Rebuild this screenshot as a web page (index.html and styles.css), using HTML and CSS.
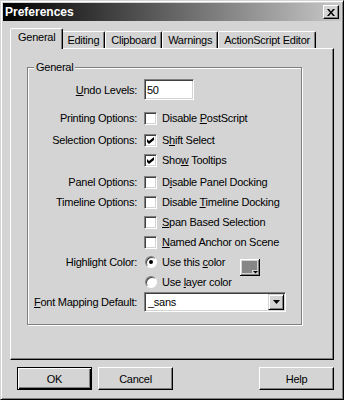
FILE: index.html
```html
<!DOCTYPE html>
<html lang="en">
<head>
    <meta charset="UTF-8">
    <title>Preferences</title>
    <link rel="stylesheet" href="styles.css">
</head>
<body>

<div class="window">
    <div class="titlebar">
        <span class="title">Preferences</span>
        <button type="button" class="close-btn" aria-label="Close">
            <svg width="8" height="7" viewBox="0 0 8 7"><path d="M0 0h2l2 2.5 2-2.5h2l-3 3.5 3 3.5h-2l-2-2.5-2 2.5h-2l3-3.5z" fill="#000"/></svg>
        </button>
    </div>

    <div class="tabs">
        <div class="tab active">General</div>
        <div class="tab">Editing</div>
        <div class="tab">Clipboard</div>
        <div class="tab">Warnings</div>
        <div class="tab">ActionScript Editor</div>
    </div>

    <div class="panel">
        <fieldset class="group">
            <legend>General</legend>

            <div class="row row-undo">
                <label class="row-label" for="undo"><u>U</u>ndo Levels:</label>
                <input type="text" id="undo" class="textbox" value="50">
            </div>

            <div class="row row-printing">
                <span class="row-label">Printing Options:</span>
                <span class="option"><span class="check"></span><span>Disable <u>P</u>ostScript</span></span>
            </div>

            <div class="row row-space">
                <span class="row-label">Selection Options:</span>
                <span class="option"><span class="check"><svg width="7" height="7" viewBox="0 0 7 7"><path d="M0 2l2 2 5-4v3l-5 4-2-2z" fill="#000"/></svg></span><span>S<u>h</u>ift Select</span></span>
            </div>
            <div class="row indent">
                <span class="option"><span class="check"><svg width="7" height="7" viewBox="0 0 7 7"><path d="M0 2l2 2 5-4v3l-5 4-2-2z" fill="#000"/></svg></span><span>Sho<u>w</u> Tooltips</span></span>
            </div>

            <div class="row row-space">
                <span class="row-label">Panel Options:</span>
                <span class="option"><span class="check"></span><span>D<u>i</u>sable Panel Docking</span></span>
            </div>
            <div class="row">
                <span class="row-label">Timeline Options:</span>
                <span class="option"><span class="check"></span><span>Disable <u>T</u>imeline Docking</span></span>
            </div>
            <div class="row indent">
                <span class="option"><span class="check"></span><span><u>S</u>pan Based Selection</span></span>
            </div>
            <div class="row indent">
                <span class="option"><span class="check"></span><span><u>N</u>amed Anchor on Scene</span></span>
            </div>

            <div class="row row-top">
                <span class="row-label">Highlight Color:</span>
                <span class="option option-color"><span class="radio on"></span><span>Use this <u>c</u>olor</span></span>
                <svg class="swatch" width="20" height="17" viewBox="0 0 20 17">
                    <rect width="20" height="17" fill="#000"/>
                    <rect width="19" height="16" fill="#fff"/>
                    <rect x="1" y="1" width="18" height="15" fill="#808080"/>
                    <rect x="1" y="1" width="17" height="14" fill="#d4d4d4"/>
                    <rect x="2" y="2" width="15" height="12" fill="#868686"/>
                    <rect x="12" y="11" width="6" height="4" fill="#d4d4d4"/>
                    <path d="M13 12h5l-2.5 2.5z" fill="#000"/>
                </svg>
            </div>
            <div class="row indent">
                <span class="option"><span class="radio"></span><span>Use <u>l</u>ayer color</span></span>
            </div>

            <div class="row row-font">
                <span class="row-label"><u>F</u>ont Mapping Default:</span>
                <div class="combo">
                    <span class="combo-text">_sans</span>
                    <span class="combo-btn"><svg width="7" height="4" viewBox="0 0 7 4"><path d="M0 0h7l-3.5 4z" fill="#000"/></svg></span>
                </div>
            </div>
        </fieldset>
    </div>

    <div class="actions">
        <button type="button" class="btn btn-default">OK</button>
        <button type="button" class="btn">Cancel</button>
        <button type="button" class="btn btn-help">Help</button>
    </div>
</div>

</body>
</html>
```

FILE: styles.css
```css
body {
    margin: 0;
    font-family: "Liberation Sans", Arial, sans-serif;
    font-size: 11px;
    letter-spacing: -0.25px;
    color: #000;
    background-color: #d4d4d4;
}
u {
    text-decoration: underline;
    text-underline-offset: 1px;
}
.window {
    width: 344px;
    height: 400px;
    box-sizing: border-box;
    display: flex;
    flex-direction: column;
    padding: 2px;
    background-color: #d4d4d4;
    border: 1px solid;
    border-color: #d4d4d4 #000 #000 #d4d4d4;
    box-shadow: inset 1px 1px #fff, inset -1px -1px #808080;
}
.titlebar {
    height: 18px;
    flex-shrink: 0;
    display: flex;
    align-items: center;
    justify-content: space-between;
    padding: 0 2px;
    background: linear-gradient(to right, #000, #c8c8c8);
}
.title {
    color: #fff;
    font-weight: bold;
    font-size: 12px;
    letter-spacing: 0;
}
.close-btn {
    width: 16px;
    height: 14px;
    padding: 0;
    display: flex;
    align-items: center;
    justify-content: center;
    background-color: #d4d4d4;
    border: 1px solid;
    border-color: #fff #000 #000 #fff;
    box-shadow: inset -1px -1px #808080;
}

/* tabs */
.tabs {
    display: flex;
    align-items: flex-end;
    margin: 7px 7px 0;
    padding-left: 2px;
    height: 20px;
    flex-shrink: 0;
}
.tab {
    height: 16px;
    line-height: 17px;
    padding: 0 5px 0 5px;
    border: 1px solid;
    border-bottom: 0;
    border-color: #fff #000 transparent #fff;
    border-radius: 2px 2px 0 0;
    box-shadow: inset -1px 0 #808080;
    white-space: nowrap;
}
.tab.active {
    position: relative;
    z-index: 1;
    height: 20px;
    line-height: 16px;
    margin: 0 -2px -1px;
    padding: 0 7px 0 7px;
    background-color: #d4d4d4;
}
.panel {
    flex: 1;
    margin: 0 7px;
    border: 1px solid;
    border-color: #fff #000 #000 #fff;
    box-shadow: inset -1px -1px #808080;
}

/* group box */
.group {
    width: 275px;
    box-sizing: border-box;
    margin: 12px 0 0 16px;
    padding: 0 0 12px 0;
    border: 1px solid #808080;
    box-shadow: 1px 1px 0 #fff, inset 1px 1px 0 #fff;
}
.group legend {
    margin-left: 6px;
    padding: 0 2px;
    background-color: #d4d4d4;
    line-height: 13px;
}
.row {
    display: flex;
    align-items: center;
    height: 20px;
}
.row-undo {
    height: 21px;
    margin-top: 5px;
}
.row-printing {
    margin-top: 8px;
}
.row-space {
    margin-top: 2px;
}
.row-top {
    align-items: flex-start;
    line-height: 20px;
}
.indent {
    padding-left: 116px;
}
.row-label {
    width: 109px;
    margin-right: 7px;
    flex-shrink: 0;
    text-align: right;
    white-space: nowrap;
}
.option {
    display: flex;
    align-items: center;
    height: 20px;
    white-space: nowrap;
}
.option-color {
    width: 83px;
}

/* controls */
.textbox {
    width: 50px;
    height: 21px;
    box-sizing: border-box;
    padding: 0 2px;
    font: inherit;
    letter-spacing: inherit;
    color: #000;
    background-color: #fff;
    border: 1px solid;
    border-color: #808080 #fff #fff #808080;
    box-shadow: inset 1px 1px #404040, inset -1px -1px #d4d4d4;
    outline: none;
}
.check {
    width: 13px;
    height: 13px;
    box-sizing: border-box;
    margin-right: 5px;
    display: flex;
    align-items: center;
    justify-content: center;
    background-color: #fff;
    border: 1px solid;
    border-color: #808080 #fff #fff #808080;
    box-shadow: inset 1px 1px #404040, inset -1px -1px #d4d4d4;
}
.radio {
    width: 12px;
    height: 12px;
    box-sizing: border-box;
    margin: 0 5px 0 1px;
    display: flex;
    align-items: center;
    justify-content: center;
    border-radius: 50%;
    background-color: #fff;
    border: 1px solid;
    border-color: #808080 #fff #fff #808080;
    box-shadow: inset 1px 1px #404040;
}
.radio.on::after {
    content: "";
    width: 4px;
    height: 4px;
    border-radius: 50%;
    background-color: #000;
}
.swatch {
    margin: 7px 0 0 13px;
    flex-shrink: 0;
}
.combo {
    width: 142px;
    height: 20px;
    box-sizing: border-box;
    padding: 1px;
    display: flex;
    align-items: center;
    background-color: #fff;
    border: 1px solid;
    border-color: #808080 #fff #fff #808080;
    box-shadow: inset 1px 1px #404040, inset -1px -1px #d4d4d4;
}
.combo-text {
    flex: 1;
    padding-left: 2px;
}
.combo-btn {
    width: 16px;
    height: 16px;
    box-sizing: border-box;
    display: flex;
    align-items: center;
    justify-content: center;
    background-color: #d4d4d4;
    border: 1px solid;
    border-color: #d4d4d4 #000 #000 #d4d4d4;
    box-shadow: inset 1px 1px #fff, inset -1px -1px #808080;
}

/* buttons */
.actions {
    display: flex;
    gap: 6px;
    height: 23px;
    flex-shrink: 0;
    margin: 7px 7px 7px 14px;
}
.btn {
    width: 75px;
    height: 23px;
    box-sizing: border-box;
    padding: 0;
    font: inherit;
    letter-spacing: inherit;
    color: #000;
    background-color: #d4d4d4;
    border: 1px solid;
    border-color: #fff #000 #000 #fff;
    box-shadow: inset -1px -1px #808080;
}
.btn-default {
    border-color: #000;
    box-shadow: inset 1px 1px #fff, inset -1px -1px #000, inset -2px -2px #808080;
}
.btn-help {
    margin-left: auto;
}
```
